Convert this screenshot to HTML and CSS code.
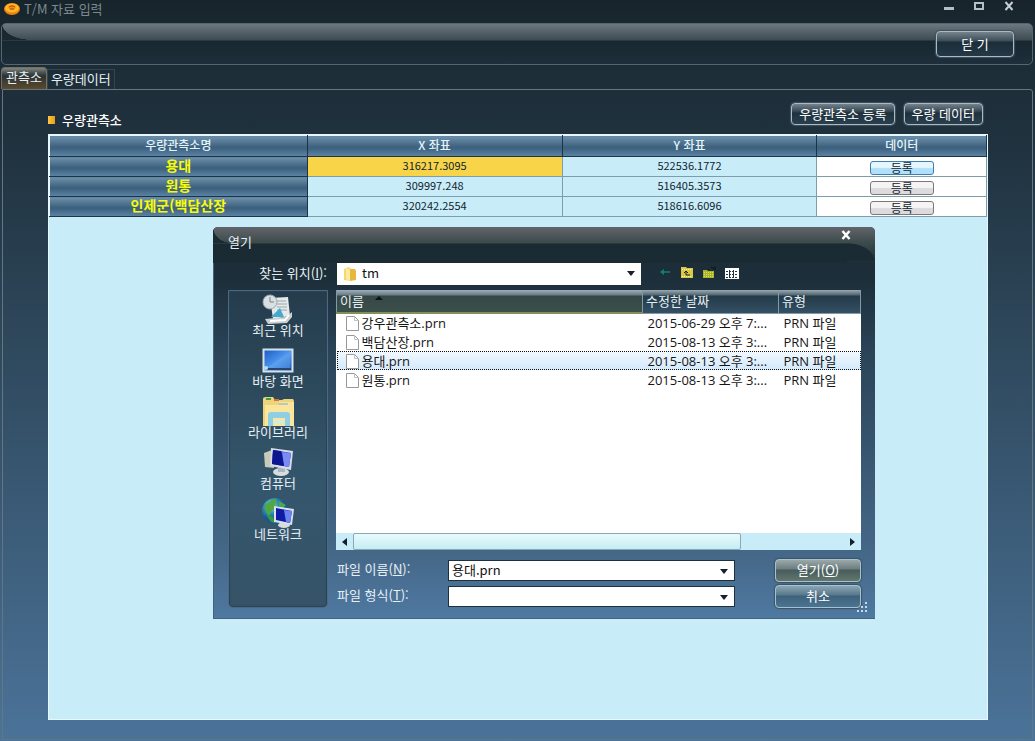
FILE: index.html
```html
<!DOCTYPE html>
<html lang="ko">
<head>
<meta charset="utf-8">
<title>T/M 자료 입력</title>
<link rel="stylesheet" href="styles.css">
</head>
<body>
<div class="window">
  <header class="titlebar">
    <svg class="app-icon" width="16" height="14" viewBox="0 0 16 14"><ellipse cx="8" cy="7" rx="8" ry="6" fill="#e8820e"/><ellipse cx="8" cy="6" rx="7" ry="4.5" fill="#ffb629"/><path d="M4 5q4-3 8 0-1 3-4 3T4 5z" fill="#f58a12"/><path d="M5 4.500q3-1.500 6 0M6 7h4" stroke="#a84b08" fill="none"/></svg>
    <h1 class="title">T/M 자료 입력</h1>
    <div class="window-buttons">
      <button class="win-btn" aria-label="최소화"><svg width="12" height="12" viewBox="0 0 12 12"><path d="M1 8.500h10" stroke="#b5c0c4" stroke-width="3"/></svg></button>
      <button class="win-btn" aria-label="최대화"><svg width="12" height="12" viewBox="0 0 12 12"><path d="M2 3h8v6H2z" fill="none" stroke="#b5c0c4" stroke-width="2"/></svg></button>
      <button class="win-btn" aria-label="닫기"><svg width="12" height="12" viewBox="0 0 12 12"><path d="M2.500 2l7 8M9.500 2l-7 8" stroke="#c5ced1" stroke-width="2"/></svg></button>
    </div>
  </header>
  <div class="toolbar"><button class="glass-btn close-btn">닫 기</button></div>
  <nav class="tabs" role="tablist">
    <button class="tab tab-active" role="tab" aria-selected="true">관측소</button>
    <button class="tab" role="tab" aria-selected="false">우량데이터</button>
  </nav>
  <main class="panel">
    <div class="panel-head">
      <h2 class="section-title">우량관측소</h2>
      <button class="glass-btn small-btn">우량관측소 등록</button>
      <button class="glass-btn small-btn">우량 데이터</button>
    </div>
    <section class="sheet">
      <table class="stations">
        <colgroup><col class="col-name"><col class="col-coord"><col class="col-coord"><col></colgroup>
        <thead><tr><th>우량관측소명</th><th>X 좌표</th><th>Y 좌표</th><th>데이터</th></tr></thead>
        <tbody>
          <tr><th>용대</th><td class="picked">316217.3095</td><td>522536.1772</td><td class="action"><button class="row-btn row-btn-hot">등록</button></td></tr>
          <tr><th>원통</th><td>309997.248</td><td>516405.3573</td><td class="action"><button class="row-btn">등록</button></td></tr>
          <tr><th>인제군(백담산장</th><td>320242.2554</td><td>518616.6096</td><td class="action"><button class="row-btn">등록</button></td></tr>
        </tbody>
      </table>
    </section>
  </main>

  <div class="dialog" role="dialog" aria-label="열기">
    <div class="dialog-title">
      <span>열기</span>
      <button class="dialog-close" aria-label="닫기"><svg width="12" height="10" viewBox="0 0 12 10"><path d="M2.500 1l7 8M9.500 1l-7 8" stroke="#fff" stroke-width="2.500"/></svg></button>
    </div>
    <div class="lookup">
      <label class="lookup-label" for="folder">찾는 위치(<u>I</u>):</label>
      <div class="combo lookup-combo">
        <svg class="folder" width="14" height="16" viewBox="0 0 14 16"><path d="M1 3l5-2 2 2v12l-7-1z" fill="#f3d873"/><path d="M7 3h5l1 2v9l-6 1z" fill="#e6b93e"/><path d="M3 2l4 2v11l-4-2z" fill="#fbeaa0"/></svg>
        <select id="folder"><option>tm</option></select>
      </div>
      <div class="nav-icons">
        <button aria-label="뒤로"><svg width="14" height="14" viewBox="0 0 14 14"><path d="M3 6h9" fill="none" stroke="#12806e" stroke-width="1.500"/><path d="M2 6l4-3v6z" fill="#12806e"/></svg></button>
        <button aria-label="상위 폴더"><svg width="14" height="14" viewBox="0 0 14 14"><path d="M1 1h5l1 1h6v10H1z" fill="#d8c94b"/><path d="M2 3.500h10M2 10.500h10" stroke="#fff39a" stroke-dasharray="1 1"/><path d="M10 9H6V5M4 7l2-2 2 2" fill="none" stroke="#1a1d10"/></svg></button>
        <button aria-label="새 폴더"><svg width="14" height="14" viewBox="0 0 14 14"><path d="M1 4h4l1 1h6v7H1z" fill="#a9b52c"/><path d="M2 6.500h9M2 8.500h9M2 10.500h9" stroke="#e2de4d" stroke-dasharray="1 1"/><path d="M9 1l3 2M13 0v4M7 4l-1-1" stroke="#0a1014"/></svg></button>
        <button aria-label="보기"><svg width="16" height="14" viewBox="0 0 16 14"><path d="M1 2h14v11H1z" fill="#fff"/><path d="M2 5.500h12M2 8.500h12M2 11.500h12" stroke="#203340" stroke-dasharray="2 1"/><path d="M5.500 4v8M9.500 4v8" stroke="#203340"/></svg></button>
      </div>
    </div>
    <div class="dialog-body">
      <nav class="places">
        <button class="place"><svg width="32" height="30" viewBox="0 0 32 30"><path d="M8 4l18-1 2 19-17 3z" fill="#e5e9e9"/><path d="M13 7h11M14 10h11M15 13h10M15 16h10" stroke="#98a7ad"/><path d="M3 25l21-2 6-5v5l-5 6-19 1z" fill="#c9d0d2"/><path d="M8 27l15-1 4-5" fill="none" stroke="#fff" stroke-width="2"/><path d="M9 23l9-9 4 9z" fill="#43a9d2"/><circle cx="8" cy="8" r="7" fill="#d8e0e3" stroke="#9dabb1"/><path d="M8 3v5h4" fill="none" stroke="#71858d"/></svg>최근 위치</button>
        <button class="place"><svg width="32" height="30" viewBox="0 0 32 30"><defs><linearGradient id="scr" x2="1" y2="1"><stop stop-color="#1b58c7"/><stop offset=".5" stop-color="#4d95ec"/><stop offset="1" stop-color="#1750bd"/></linearGradient></defs><path d="M1.500 4.500h29v22h-29z" fill="url(#scr)" stroke="#d4e3eb" stroke-width="2"/><path d="M2 25l27-19-1 19z" fill="#73b3f3" opacity=".4"/><path d="M3 24h26" stroke="#2b456f" stroke-width="2"/><circle cx="4" cy="23" r="2" fill="#b6e3eb"/></svg>바탕 화면</button>
        <button class="place"><svg width="34" height="30" viewBox="0 0 34 30"><path d="M2 3q0-2 3-2h7l2 3h7l2-1h9q1 1 1 3v24H2z" fill="#efd37a"/><path d="M4 9h12l2-3h15v24H4z" fill="#fae59c"/><path d="M5 3h5" stroke="#3b9e46" stroke-width="2"/><path d="M13 4h5" stroke="#e26c35" stroke-width="2"/><path d="M17 8h10" stroke="#78adc5"/><path d="M7 19q0-3 3-3h16q3 0 3 3v11h-5v-8H12v8H7z" fill="#8fcfe5"/><path d="M13 24h10v4H13z" fill="#d7ecd7"/></svg>라이브러리</button>
        <button class="place"><svg width="32" height="30" viewBox="0 0 32 30"><path d="M2 6l8-3 2 18-9-1z" fill="#c9cbb8"/><ellipse cx="19" cy="25" rx="8" ry="4" fill="#d8dcdc"/><path d="M16 18l7 2v5h-7z" fill="#aab4bb"/><path d="M9 1l22 3-2 19-21-4z" fill="#d8dce9"/><path d="M11 3l18 3-2 14-17-3z" fill="#1725b5"/><path d="M20 5l9 1-2 14-5-1z" fill="#7a8cf2"/><path d="M11 3l8 1 3 15-12-2z" fill="#0c168f"/></svg>컴퓨터</button>
        <button class="place"><svg width="32" height="30" viewBox="0 0 32 30"><defs><radialGradient id="earth" cx=".35" cy=".3"><stop stop-color="#b2eae9"/><stop offset=".5" stop-color="#3497bd"/><stop offset="1" stop-color="#145a92"/></radialGradient></defs><circle cx="13" cy="13" r="13" fill="url(#earth)"/><path d="M3 7q9-8 12-5l-2 5 3 4-6 1-3 6q-5-4-4-11zM17 3l7 4-3 3-4-2z" fill="#51a843"/><path d="M5 17l6 2 2 6q-6-1-8-8z" fill="#3c983f"/><ellipse cx="22" cy="27" rx="6" ry="3" fill="#d8dcdc"/><path d="M12 8l20 3-2 16-18-3z" fill="#dce0eb"/><path d="M14 10l16 3-2 12-14-3z" fill="#0d1ba5"/><path d="M22 12l8 1-2 12-4-1z" fill="#6b82f1"/></svg>네트워크</button>
      </nav>
      <div class="dialog-main">
        <div class="file-list">
          <table class="files">
            <colgroup><col class="f-name"><col class="f-date"><col></colgroup>
            <thead><tr><th class="sorted">이름 <span class="sort-arrow"></span></th><th>수정한 날짜</th><th>유형</th></tr></thead>
            <tbody>
              <tr><td><svg class="doc" width="13" height="15" viewBox="0 0 13 15"><path d="M.5.500h8l4 4v10H.5z" fill="#fff" stroke="#9a9898"/><path d="M8.500.500v4h4" fill="none" stroke="#c4c1c1"/></svg>강우관측소.prn</td><td>2015-06-29 오후 7:...</td><td>PRN 파일</td></tr>
              <tr><td><svg class="doc" width="13" height="15" viewBox="0 0 13 15"><path d="M.5.500h8l4 4v10H.5z" fill="#fff" stroke="#9a9898"/><path d="M8.500.500v4h4" fill="none" stroke="#c4c1c1"/></svg>백담산장.prn</td><td>2015-08-13 오후 3:...</td><td>PRN 파일</td></tr>
              <tr class="selected"><td><svg class="doc" width="13" height="15" viewBox="0 0 13 15"><path d="M.5.500h8l4 4v10H.5z" fill="#fff" stroke="#9a9898"/><path d="M8.500.500v4h4" fill="none" stroke="#c4c1c1"/></svg>용대.prn</td><td>2015-08-13 오후 3:...</td><td>PRN 파일</td></tr>
              <tr><td><svg class="doc" width="13" height="15" viewBox="0 0 13 15"><path d="M.5.500h8l4 4v10H.5z" fill="#fff" stroke="#9a9898"/><path d="M8.500.500v4h4" fill="none" stroke="#c4c1c1"/></svg>원통.prn</td><td>2015-08-13 오후 3:...</td><td>PRN 파일</td></tr>
            </tbody>
          </table>
          <div class="hscroll">
            <button class="scroll-btn" aria-label="왼쪽"><svg width="5" height="8" viewBox="0 0 5 8"><path d="M5 0v8L0 4z" fill="#10202c"/></svg></button>
            <div class="track"><div class="thumb"></div></div>
            <button class="scroll-btn" aria-label="오른쪽"><svg width="5" height="8" viewBox="0 0 5 8"><path d="M0 0v8l5-4z" fill="#10202c"/></svg></button>
          </div>
        </div>
        <div class="fields">
          <label for="fname">파일 이름(<u>N</u>):</label>
          <div class="combo boxed"><input id="fname" type="text" value="용대.prn"></div>
          <button class="glass-btn dialog-btn default-btn">열기(<u>O</u>)</button>
          <label for="ftype">파일 형식(<u>T</u>):</label>
          <div class="combo boxed"><select id="ftype"><option></option></select></div>
          <button class="glass-btn dialog-btn">취소</button>
        </div>
      </div>
    </div>
    <svg class="grip" width="12" height="12" viewBox="0 0 12 12"><path d="M9 1h2v2H9zM5 5h2v2H5zM9 5h2v2H9zM1 9h2v2H1zM5 9h2v2H5zM9 9h2v2H9z" fill="#c5dce8"/></svg>
  </div>
</div>
</body>
</html>
```
FILE: styles.css
```css
* { box-sizing: border-box; }

body {
  margin: 0;
  font: 13px/16px "Noto Sans CJK KR", sans-serif;
  color: #e6f0f4;
}

button, input, select {
  margin: 0;
  padding: 0;
  border: 0;
  background: none;
  color: inherit;
  font: inherit;
}

h1, h2 { margin: 0; font-size: 13px; }

.window {
  position: relative;
  display: flex;
  flex-direction: column;
  min-height: 100vh;
  background: linear-gradient(#17242b 0, #1d2d38 9%, #20323f 20%, #2b4355 40%, #4b7399 100%);
}

.titlebar {
  display: flex;
  align-items: center;
  height: 23px;
  padding: 0 20px 5px 4px;
}

.title {
  flex: 1;
  padding-left: 4px;
  font-weight: 400;
  color: #7d8a8f;
}

.window-buttons { display: flex; gap: 18px; padding-bottom: 6px; }
.win-btn { display: flex; width: 12px; height: 12px; }

.toolbar {
  display: flex;
  justify-content: flex-end;
  align-items: center;
  height: 42px;
  margin: 0 2px 0 1px;
  padding-right: 18px;
  border: 1px solid #56666e;
  border-radius: 5px;
  background:
    radial-gradient(ellipse 30px 16px at 30px 0, transparent 98%, #1a2830 100%) 0 0 / 30px 16px no-repeat,
    linear-gradient(#6c787f 0, #3d4b53 16px, #182830 17px, #1e2e3b 100%);
}

.glass-btn {
  border: 1px solid #aab9c2;
  border-radius: 4px;
  background: linear-gradient(#75838b 0, #3b4d59 9px, #1b2d39 10px, #243847 100%);
  box-shadow: 0 0 1px 1px #40525e;
  color: #fff;
}

.close-btn { width: 78px; height: 26px; }

.tabs {
  display: flex;
  align-items: flex-end;
  height: 24px;
  padding-left: 1px;
}

.tab {
  height: 20px;
  padding: 0 3px 2px;
  border: 1px solid #324652;
  border-bottom: 0;
}

.tab-active {
  height: 22px;
  padding: 0 4px 3px;
  border: 1px solid #776f5c;
  border-bottom: 0;
  border-radius: 4px 4px 0 0;
  background: linear-gradient(#7f8585 0, #3d4444 6px, #2b3434 8px, #5c4a2c 100%);
}

.panel {
  display: flex;
  flex: 1;
  flex-direction: column;
  margin: 0 2px 1px;
  padding: 12px 44px 19px 45px;
  border: 1px solid #64767f;
  border-radius: 0 3px 0 0;
}

.panel-head {
  display: flex;
  align-items: center;
  gap: 9px;
  height: 32px;
  padding: 0 5px 8px 0;
}

.section-title {
  display: flex;
  flex: 1;
  align-items: center;
  gap: 7px;
  padding-top: 12px;
  font-weight: 500;
  color: #fff;
}

.section-title::before {
  content: "";
  width: 7px;
  height: 8px;
  background: linear-gradient(90deg, #ffc93a, #e39b25);
}

.small-btn {
  height: 22px;
  padding: 0 7px 1px;
  background: linear-gradient(#74838c 0, #394b57 7px, #1e313d 9px, #2a404f 100%);
}

.sheet {
  flex: 1;
  border: 1px solid #e6f8fe;
  background: #c9ecf9;
}

.stations {
  width: 100%;
  border-collapse: collapse;
  table-layout: fixed;
  font-size: 11px;
  line-height: 14px;
  text-align: center;
  color: #10242e;
}

.col-name { width: 27.5%; }
.col-coord { width: 27.2%; }

.stations th, .stations td {
  height: 20px;
  padding: 0 0 3px;
  border: 1px solid #7d9cac;
}

.stations th {
  border-color: #eaf8fd #1c3443 #1c3443 #eaf8fd;
  background: linear-gradient(#6d90ab 0, #3b5f7c 55%, #5d84a5 100%);
}

.stations thead th {
  height: 21px;
  font-size: 12px;
  font-weight: 500;
  color: #e2f5fc;
}

.stations tbody th { font-size: 14px; font-weight: 700; color: #f8fb08; }
.stations .picked { background: #f8d548; }
.stations .action { padding: 0; background: #fff; }

.row-btn {
  display: block;
  width: 64px;
  height: 14px;
  margin: 2px auto 0;
  border: 1px solid #77797d;
  border-radius: 3px;
  background: linear-gradient(#f5f3f4 45%, #dddadd 55%);
  font-size: 12px;
  line-height: 12px;
}

.row-btn-hot { border-color: #3c7fb1; background: linear-gradient(#e5f6fd 45%, #b1e0fa 55%); }

.dialog {
  position: absolute;
  top: 227px;
  left: 213px;
  width: 662px;
  padding: 0 14px 11px 15px;
  border-radius: 5px 5px 0 0;
  background: linear-gradient(#1a2a33 0, #1d2f3b 14%, #2b4458 32%, #46698a 85%, #4f79a1 100%);
  box-shadow: inset 1px -1px 0 #46637a;
}

.dialog-title {
  display: flex;
  justify-content: space-between;
  height: 36px;
  margin: 0 -14px 0 -15px;
  padding: 7px 23px 0 15px;
  border-radius: 5px 5px 0 0;
  background:
    radial-gradient(ellipse 18px 16px at 18px 0, transparent 98%, #1b2b33 100%) 0 0 / 18px 16px no-repeat,
    radial-gradient(ellipse 28px 18px at 0 100%, #1a2b34 96%, transparent 100%) 100% 16px / 28px 18px no-repeat,
    linear-gradient(#3b4a4b, #1d2e38) 100% 16px / 28px 20px no-repeat,
    linear-gradient(#62656b 0, #3b4a4b 16px, #1a2a33 17px, #1a2b34 100%);
}

.dialog-close { align-self: flex-start; height: 10px; width: 12px; display: flex; margin-top: -4px; }

.lookup { display: flex; align-items: center; height: 22px; }
.lookup-label { width: 109px; padding: 0 10px 2px 0; text-align: right; }

.combo {
  position: relative;
  display: flex;
  align-items: center;
  height: 22px;
  background: #fff;
  color: #111;
}

.combo::after {
  content: "";
  position: absolute;
  top: 8px;
  right: 6px;
  border: 4px solid transparent;
  border-top: 5px solid #16202c;
  border-bottom: 0;
  pointer-events: none;
}

.combo select, .combo input {
  flex: 1;
  min-width: 0;
  height: 100%;
  padding-bottom: 2px;
  appearance: none;
  outline: 0;
}

.lookup-combo { width: 304px; padding-left: 6px; gap: 5px; }

.nav-icons { display: flex; gap: 8px; padding: 0 0 2px 17px; }
.nav-icons button { display: flex; }

.dialog-body { display: flex; gap: 8px; margin-top: 5px; }

.places {
  display: flex;
  flex-direction: column;
  align-items: center;
  gap: 7px;
  width: 100px;
  padding: 3px 0 0;
  border: 1px solid #4a6a7f;
  border-radius: 0 0 5px 5px;
  background: linear-gradient(#253c4c, #34566c 60%, #365368);
  box-shadow: inset 0 0 1px 1px #28435a;
}

.place {
  display: flex;
  flex-direction: column;
  align-items: center;
  line-height: 14px;
}

.place svg { margin-bottom: -1px; }
.place { padding-bottom: 1px; }

.dialog-main { flex: 1; min-width: 0; }

.file-list {
  display: flex;
  flex-direction: column;
  justify-content: space-between;
  height: 260px;
  background: #fff;
}

.files {
  width: 100%;
  border-collapse: collapse;
  table-layout: fixed;
  font: 13px/18px "Open Sans", "Noto Sans CJK KR", sans-serif;
  color: #151515;
}

.f-name { width: 306px; }
.f-date { width: 136px; }

.files th {
  height: 23px;
  padding: 0 3px;
  border: 1px solid #829aa8;
  border-top: 0;
  background: linear-gradient(#9aa9b2 0, #53656f 5px, #233a49 6px, #345064 100%);
  font-weight: 400;
  text-align: left;
  color: #e5f0f4;
}

.files .sorted {
  border-bottom: 2px solid #828e5b;
  background: linear-gradient(#9dafbd 0, #6b7b84 5px, #354846 6px, #3b4f4b 100%);
}

.sort-arrow {
  display: inline-block;
  margin: 0 0 6px 8px;
  border: 4px solid transparent;
  border-top: 0;
  border-bottom: 4px solid #0b1318;
}

.files td { height: 19px; padding: 0 0 0 5px; white-space: nowrap; }
.files td:first-child { padding-left: 9px; }

.files .selected {
  outline: 1px dotted #111;
  outline-offset: -1px;
  background: linear-gradient(#f2f9ff, #d3e9fb);
}

.doc { margin-right: 3px; vertical-align: -3px; }

.hscroll { display: flex; height: 17px; background: #c9ecf9; }
.scroll-btn { display: flex; justify-content: center; align-items: center; width: 17px; }
.track { flex: 1; }

.thumb {
  width: 79%;
  height: 17px;
  border: 1px solid #88a9b4;
  border-radius: 2px;
  background: linear-gradient(#e7fafb, #c5edf6);
}

.fields {
  display: grid;
  grid-template-columns: 112px 287px 1fr;
  row-gap: 3px;
  align-items: center;
  padding-top: 9px;
}

.fields label { padding: 0 0 4px 1px; }
.boxed { height: 21px; padding-left: 3px; border: 1px solid #1c303e; }

.dialog-btn {
  justify-self: end;
  width: 86px;
  height: 23px;
  padding-bottom: 2px;
  border-color: #9fc4d8;
  background: linear-gradient(#8aa5b4 0, #58788b 9px, #3e627c 10px, #4c7491 100%);
}

.default-btn { background: linear-gradient(#9aa8a8 0, #6c7d80 9px, #465c5e 10px, #64766b 100%); }

.grip { position: absolute; right: 7px; bottom: 6px; }
```
